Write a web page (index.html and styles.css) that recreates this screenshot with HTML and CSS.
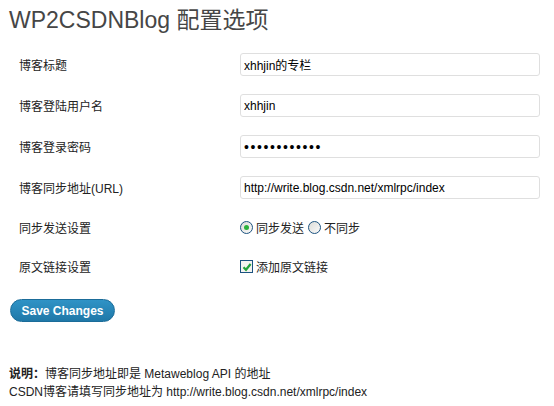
FILE: index.html
```html
<!DOCTYPE html>
<html>
<head>
<meta charset="utf-8">
<link rel="stylesheet" href="styles.css">
</head>
<body>
<div class="wrap">
  <h2 class="title">WP2CSDNBlog 配置选项</h2>
  <form class="form">
    <div class="row">
      <div class="label">博客标题</div>
      <div class="field"><input class="text" type="text" value="xhhjin的专栏"></div>
    </div>
    <div class="row">
      <div class="label">博客登陆用户名</div>
      <div class="field"><input class="text" type="text" value="xhhjin"></div>
    </div>
    <div class="row">
      <div class="label">博客登录密码</div>
      <div class="field"><input class="text pass" type="password" value="xxxxxxxxxxxx"></div>
    </div>
    <div class="row">
      <div class="label">博客同步地址(URL)</div>
      <div class="field"><input class="text" type="text" value="http://write.blog.csdn.net/xmlrpc/index"></div>
    </div>
    <div class="row row-opt">
      <div class="label">同步发送设置</div>
      <div class="field opts">
        <label class="opt"><span class="radio on"><span class="dot"></span></span>同步发送</label>
        <label class="opt"><span class="radio"></span>不同步</label>
      </div>
    </div>
    <div class="row row-opt row-check">
      <div class="label">原文链接设置</div>
      <div class="field opts">
        <label class="opt"><span class="check"><svg width="10" height="10" viewBox="0 0 10 10"><path d="M1.5 5.2 L4 7.8 L8.6 2" fill="none" stroke="#22a33a" stroke-width="2.2"/></svg></span>添加原文链接</label>
      </div>
    </div>
    <div class="actions">
      <button type="button" class="btn">Save Changes</button>
    </div>
  </form>
  <div class="notes">
    <p><b>说明：</b>博客同步地址即是 Metaweblog API 的地址</p>
    <p>CSDN博客请填写同步地址为 http://write.blog.csdn.net/xmlrpc/index</p>
  </div>
</div>
</body>
</html>
```
FILE: styles.css
```css
html, body {
  margin: 0;
  padding: 0;
  background: #fff;
}
body {
  font-family: "Liberation Sans", Arial, "Noto Sans CJK SC", sans-serif;
  font-size: 12px;
  color: #333;
}
.wrap {
  padding: 0 0 0 9px;
}
.title {
  margin: 0;
  padding-top: 6px;
  font-size: 23px;
  font-weight: normal;
  color: #464646;
  line-height: 28px;
  height: 34px;
}
.form {
  margin: 0;
  padding-top: 4px;
}
.row {
  display: flex;
  align-items: center;
  height: 41px;
}
.label {
  width: 221px;
  padding-left: 10px;
  color: #222;
}
.field {
  flex: 0 0 auto;
}
.text {
  box-sizing: border-box;
  width: 300px;
  height: 23px;
  border: 1px solid #dfdfdf;
  border-radius: 3px;
  padding: 0 3px;
  font-family: "Liberation Sans", Arial, "Noto Sans CJK SC", sans-serif;
  font-size: 12px;
  color: #000;
  background: #fff;
  outline: none;
}
.pass {
  font-size: 14px;
  letter-spacing: 1.6px;
}
.row-opt {
  height: 39px;
}
.opts {
  display: flex;
  align-items: center;
  gap: 4px;
}
.opt {
  display: flex;
  align-items: center;
  gap: 3px;
  color: #222;
}
.radio {
  box-sizing: border-box;
  width: 13px;
  height: 13px;
  border-radius: 50%;
  border: 1px solid #1c5380;
  background: linear-gradient(135deg, #dcdcd8, #fafafa);
  display: flex;
  align-items: center;
  justify-content: center;
}
.radio .dot {
  width: 5px;
  height: 5px;
  border-radius: 50%;
  background: #2bb13c;
}
.check {
  box-sizing: border-box;
  width: 13px;
  height: 13px;
  border: 1px solid #1c5380;
  background: #f4f4f0;
  display: flex;
  align-items: center;
  justify-content: center;
}
.check svg {
  display: block;
}
.actions {
  padding-top: 13px;
  padding-left: 1px;
}
.btn {
  box-sizing: border-box;
  width: 105px;
  height: 23px;
  border: 1px solid #1b6c99;
  border-radius: 12px;
  background: linear-gradient(#2f93c6, #1f78a8);
  color: #fff;
  font-family: "Liberation Sans", Arial, sans-serif;
  font-weight: bold;
  font-size: 12px;
  padding: 0;
  cursor: pointer;
}
.notes {
  padding-top: 43px;
}
.notes p {
  margin: 0;
  line-height: 18px;
  color: #222;
}
.notes b {
  font-weight: bold;
}
```
